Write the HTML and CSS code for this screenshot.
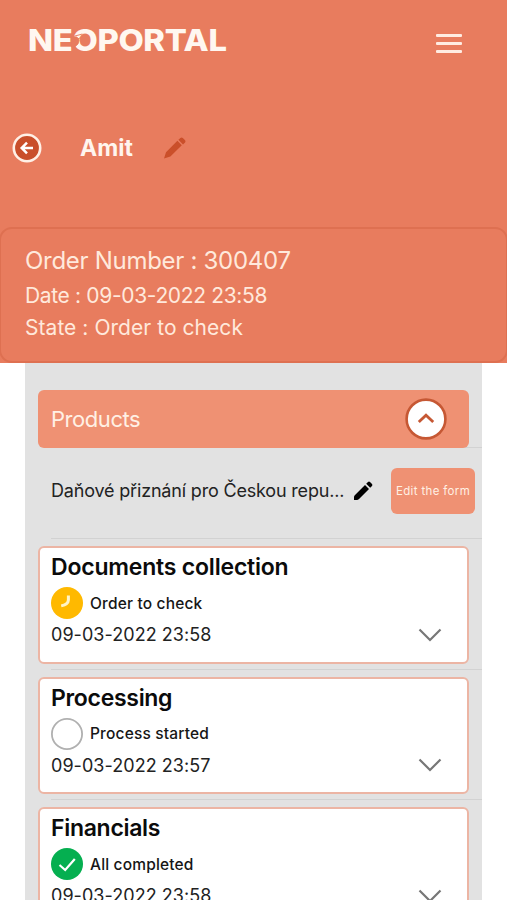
FILE: index.html
```html
<!DOCTYPE html>
<html lang="en">
<head>
<meta charset="utf-8">
<meta name="viewport" content="width=device-width, initial-scale=1">
<title>Neoportal</title>
<link rel="stylesheet" href="styles.css">
</head>
<body>
<header class="hero">
  <div class="topbar">
    <div class="logo"><span>NE</span><span class="logo-o">O<svg class="logo-cut" viewBox="0 0 24 24"><path d="M0 8L5 8L7 11L6 15L3 18L0 18Z"/><path d="M0 8L10 5M1 12L10 8" /></svg></span><span>PORTAL</span></div>
    <div class="menu"><i></i><i></i><i></i></div>
  </div>
  <div class="user">
    <svg class="back" viewBox="0 0 30 30"><circle cx="15" cy="15" r="13.2"/><path d="M21 15H10M15 9.7L9.7 15L15 20.3"/></svg>
    <h1 class="name">Amit</h1>
    <svg class="pencil-user" viewBox="0 0 22 22"><path d="M0 21.5L2 15.2L13.4 3.8L17.8 8.2L6.4 19.6ZM14.4 2.8L16.4 .9Q17.6 0 18.8 .9L21.1 3.2Q22 4.2 21.1 5.4L19 7.4Z"/></svg>
  </div>
</header>
<section class="order">
  <div class="order-number">Order Number : 300407</div>
  <div class="order-date">Date : 09-03-2022 23:58</div>
  <div class="order-state">State : Order to check</div>
</section>
<main class="panel">
  <div class="products"><span class="products-title">Products</span>
    <svg class="collapse" viewBox="0 0 42 42"><circle cx="21" cy="21" r="19.4"/><path d="M13.8 24L21 17.2L28.2 24"/></svg>
  </div>
  <div class="product-row">
    <span class="product-name">Daňové přiznání pro Českou repu...</span>
    <svg class="pencil-row" viewBox="0 0 20 20"><path d="M1 19V16Q1 15 2 14L12 4L16 8L6 18Q5 19 4 19ZM13.2 2.8L15 1Q16 .2 17 1L19 3Q19.8 4 19 5L17.2 6.8Z"/></svg>
    <button class="edit">Edit the form</button>
  </div>
  <div class="step">
    <article class="card">
      <h2 class="title t-doc">Documents collection</h2>
      <div class="status"><svg class="icon" viewBox="0 0 32 32"><circle cx="16" cy="16" r="16" fill="#ffb900"/><path class="mark mark-clock" d="M17.4 8.5V13Q17.2 17.5 10.2 18.9"/></svg><span>Order to check</span></div>
      <time class="date">09-03-2022 23:58</time>
      <svg class="chevron" viewBox="0 0 24 14"><path d="M1.5 1.5L12 12L22.5 1.5"/></svg>
    </article>
  </div>
  <div class="step">
    <article class="card">
      <h2 class="title">Processing</h2>
      <div class="status"><svg class="icon" viewBox="0 0 32 32"><circle cx="16" cy="16" r="15.1" fill="#fff" stroke="#b0b0b0" stroke-width="1.8"/></svg><span>Process started</span></div>
      <time class="date">09-03-2022 23:57</time>
      <svg class="chevron" viewBox="0 0 24 14"><path d="M1.5 1.5L12 12L22.5 1.5"/></svg>
    </article>
  </div>
  <div class="step">
    <article class="card">
      <h2 class="title">Financials</h2>
      <div class="status"><svg class="icon" viewBox="0 0 32 32"><circle cx="16" cy="16" r="16" fill="#05af50"/><path class="mark" d="M8.5 17L14.2 22L23.8 11"/></svg><span>All completed</span></div>
      <time class="date">09-03-2022 23:58</time>
      <svg class="chevron" viewBox="0 0 24 14"><path d="M1.5 1.5L12 12L22.5 1.5"/></svg>
    </article>
  </div>
</main>
</body>
</html>
```
FILE: styles.css
```css
* { box-sizing: border-box; }
html, body { margin: 0; height: 900px; overflow: hidden; }
body {
  background: linear-gradient(#e87c5e 363px, #fff 363px);
  font-family: Inter, "Noto Sans", sans-serif;
  color: #222;
}
svg { display: block; flex: none; fill: none; }
h1, h2 { margin: 0; }
.hero { height: 227px; }
.topbar { display: flex; justify-content: space-between; align-items: flex-start; height: 132px; padding: 23px 45px 0 28px; }
.logo { display: flex; color: #fff7f0; font-size: 29.5px; line-height: 35px; font-weight: 800; letter-spacing: -0.3px; white-space: nowrap; transform: scaleX(1.11); transform-origin: left; }
.logo-o { position: relative; }
.logo-cut { position: absolute; left: -1px; top: 6px; width: 24px; height: 24px; fill: #e87c5e; stroke: #e87c5e; stroke-width: 0.9; }
.menu { display: flex; flex-direction: column; gap: 5px; width: 26px; padding-top: 11px; }
.menu i { height: 3px; background: #ffece2; border-radius: 1px; }
.user { display: flex; align-items: center; height: 32px; padding-left: 12px; }
.back { width: 30px; height: 30px; }
.back circle { fill: #c94f2b; stroke: #fff0e6; stroke-width: 2.6; }
.back path { stroke: #fff; stroke-width: 2.5; }
.name { width: 84px; margin-left: 38px; color: #fff5ee; font-size: 23px; line-height: 30px; font-weight: 700; }
.pencil-user { width: 22px; height: 22px; fill: #ca4f2a; }
.order { height: 136px; margin: 0 -1px; padding: 14px 24px; border: 2px solid #de7051; border-radius: 13px; background: #e87c5e; color: #ffe9dc; white-space: nowrap; }
.order div { width: max-content; }
.order-number { font-size: 24px; line-height: 36px; letter-spacing: -0.29px; }
.order-date, .order-state { font-size: 21px; line-height: 33px; letter-spacing: -0.34px; }
.order-state { line-height: 32px; letter-spacing: 0.05px; }
.panel { width: 457px; height: 537px; margin-left: 25px; padding-top: 27px; overflow: hidden; background: #e2e2e2; white-space: nowrap; }
.products { position: relative; z-index: 1; display: flex; justify-content: space-between; align-items: center; width: 431px; height: 58px; margin-left: 13px; padding: 0 22px 0 13px; border-radius: 6px; background: #ef9173; }
.products-title { color: #fff0e4; font-size: 22px; letter-spacing: -0.45px; }
.collapse { width: 42px; height: 42px; }
.collapse circle { fill: #fff; stroke: #c65834; stroke-width: 2.6; }
.collapse path { stroke: #c65834; stroke-width: 2.8; }
.product-row { display: flex; align-items: center; height: 92px; margin: -1px 0 0 26px; padding-bottom: 5px; border: solid #d2d2d2; border-width: 1px 0; }
.product-name { width: 302px; font-size: 18px; letter-spacing: -0.18px; }
.pencil-row { width: 20px; height: 20px; fill: #000; margin-right: 18px; }
.edit { width: 84px; height: 46px; padding: 0; border: 0; border-radius: 6px; background: #ef9173; color: #fff0e4; font: 11.5px Inter, sans-serif; letter-spacing: 0.35px; }
.step { height: 130.5px; padding: 7px 0 0 13px; background: linear-gradient(#d2d2d2, #d2d2d2) 26px 100% / 100% 1px no-repeat; }
.card { display: grid; grid-template-columns: 1fr 24px; grid-template-rows: 34px 38px 25px; align-items: center; align-content: start; width: 431px; height: 117.5px; padding: 2px 25px 0 11px; border: 2px solid #ecb5a4; border-radius: 6px; background: #fff; }
.title { grid-column: 1 / 3; width: max-content; color: #0b0b0b; font-size: 23px; line-height: 34px; font-weight: 600; letter-spacing: -0.3px; }
.t-doc { letter-spacing: -0.2px; }
.status { grid-column: 1 / 3; display: flex; align-items: center; gap: 7px; font-size: 15.5px; font-weight: 500; letter-spacing: 0.17px; color: #161616; }
.icon { width: 32px; height: 32px; }
.mark { stroke: #fff; stroke-width: 2.2; }
.mark-clock { stroke: #fff4c9; stroke-width: 3; }
.date { width: max-content; font-size: 18px; letter-spacing: 0.05px; }
.chevron { width: 24px; height: 14px; }
.chevron path { stroke: #777; stroke-width: 2.2; }
```
